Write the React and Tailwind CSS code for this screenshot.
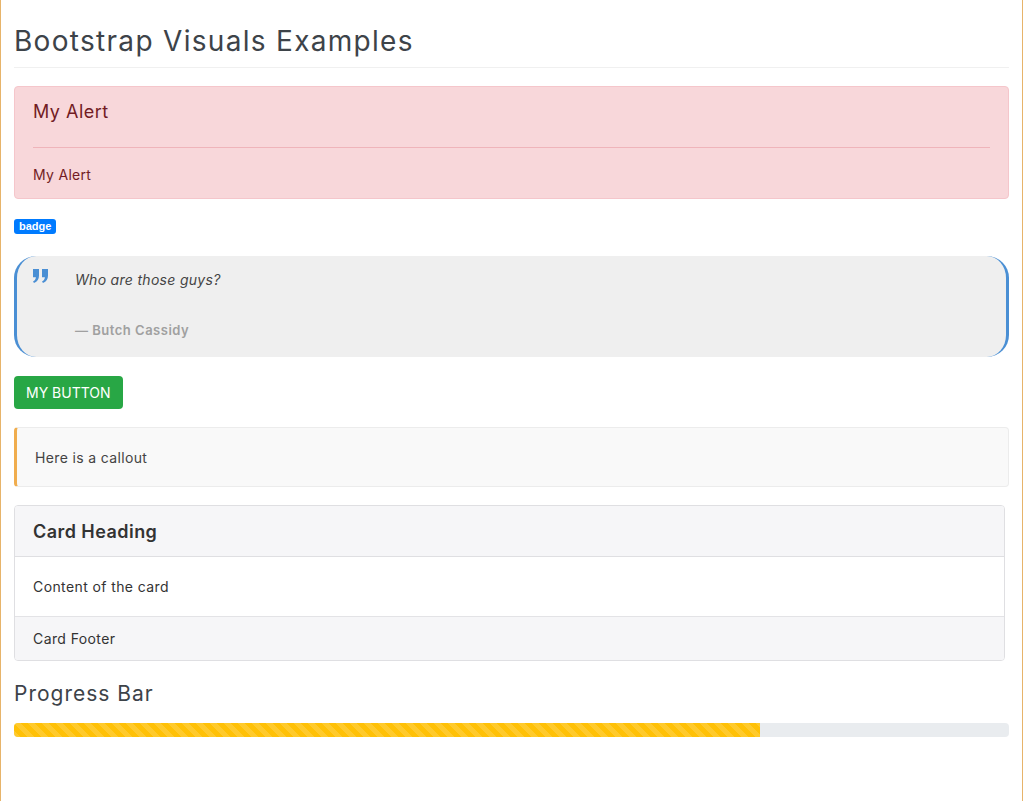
import React from 'react';

function QuoteIcon() {
  return (
    <svg width="17" height="14" viewBox="0 0 17 14" className="shrink-0">
      <path d="M1 0h6v6.5C7 10 5.5 12.5 2 14l-1-1.6c1.8-.9 2.8-2.3 2.9-4.2H1z" fill="#4a8fd4" />
      <path d="M10 0h6v6.5C16 10 14.5 12.5 11 14l-1-1.6c1.8-.9 2.8-2.3 2.9-4.2H10z" fill="#4a8fd4" />
    </svg>
  );
}

export default function App() {
  return (
    <div className="min-h-screen w-[1023px] bg-white border-x border-[#e7b46a] px-[13px] font-['Inter',sans-serif] text-[#212529]">
      {/* Title */}
      <h2 className="pt-[24px] pb-[9px] text-[28px] leading-[34px] tracking-[1.3px] text-[#3d4349] border-b border-[#f0f0f0]">
        Bootstrap Visuals Examples
      </h2>

      {/* Alert */}
      <div className="mt-[18px] rounded border border-[#f5c6cb] bg-[#f8d7da] px-[18px] pt-[12px] pb-[13px] text-[#721c24]">
        <h4 className="text-[18px] leading-[26px] tracking-[0.5px] pb-[22px] border-b border-[#efb4ba]">My Alert</h4>
        <p className="pt-[17px] text-[14px] leading-[20px] tracking-[0.3px]">My Alert</p>
      </div>

      {/* Badge */}
      <div className="mt-[20px] flex">
        <span className="rounded-[3px] bg-[#007bff] px-[5px] text-[11px] leading-[15px] font-bold text-white font-['Liberation_Sans',sans-serif]">
          badge
        </span>
      </div>

      {/* Blockquote */}
      <div className="mt-[22px] flex gap-[26px] rounded-[22px] border-x-[3px] border-[#4a8fd4] bg-[#efefef] pl-[15px] pt-[13px] pb-[18px]">
        <QuoteIcon />
        <div>
          <p className="pt-[1px] italic text-[14px] leading-[20px] tracking-[0.3px] text-[#444]">Who are those guys?</p>
          <p className="mt-[31px] text-[13px] leading-[18px] tracking-[0.5px] font-semibold text-[#a0a0a0]">— Butch Cassidy</p>
        </div>
      </div>

      {/* Button */}
      <button className="mt-[19px] block h-[33px] rounded bg-[#28a745] px-[12px] text-[14px] text-white uppercase">
        My Button
      </button>

      {/* Callout */}
      <div className="mt-[18px] flex h-[60px] items-center rounded border border-[#ececec] border-l-[3px] border-l-[#f0ad4e] bg-[#f9f9f9] pl-[18px] text-[14px] tracking-[0.35px] text-[#444]">
        Here is a callout
      </div>

      {/* Card */}
      <div className="mt-[18px] mr-[4px] rounded border border-[#dfdfe2] overflow-hidden text-[#333]">
        <div className="h-[51px] flex items-center bg-[#f6f6f8] px-[18px] border-b border-[#dfdfe2] text-[18px] tracking-[0.45px] font-semibold">
          Card Heading
        </div>
        <div className="h-[60px] flex items-center px-[18px] text-[14px] tracking-[0.4px] border-b border-[#e3e3e6]">
          Content of the card
        </div>
        <div className="h-[43px] flex items-center bg-[#f6f6f8] px-[18px] text-[14px] tracking-[0.4px]">
          Card Footer
        </div>
      </div>

      {/* Progress */}
      <h3 className="mt-[19px] text-[21px] leading-[28px] tracking-[1px] text-[#3d4349]">Progress Bar</h3>
      <div className="mt-[15px] h-[14px] rounded bg-[#e9ecef] overflow-hidden flex">
        <div className="w-3/4 h-full bg-[#ffc107] bg-[linear-gradient(45deg,rgba(255,255,255,.15)_25%,transparent_25%,transparent_50%,rgba(255,255,255,.15)_50%,rgba(255,255,255,.15)_75%,transparent_75%,transparent)] bg-[length:14px_14px]" />
      </div>
    </div>
  );
}
